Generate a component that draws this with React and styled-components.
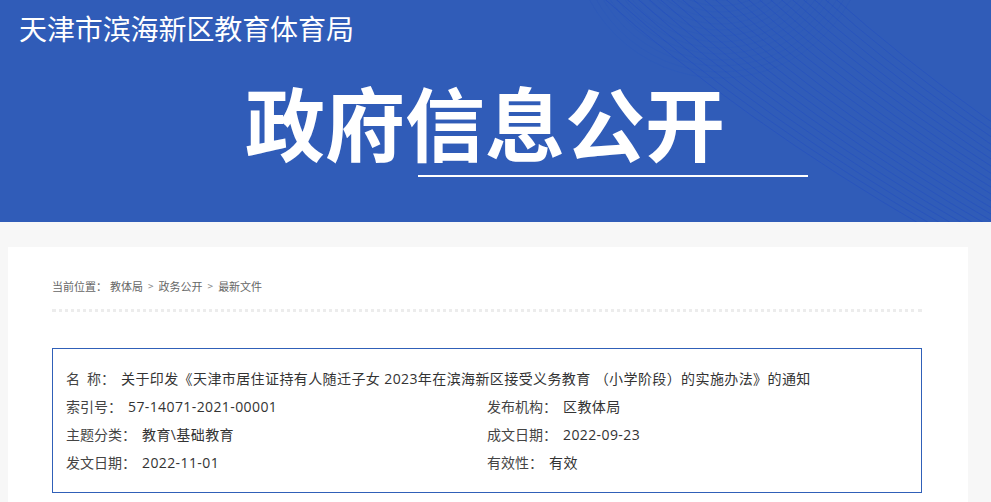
import React from "react";
import styled, { createGlobalStyle } from "styled-components";

const GlobalStyle = createGlobalStyle`
  body {
    margin: 0;
    background: #f7f7f7;
    font-family: "Noto Sans CJK SC", "Noto Sans", sans-serif;
  }
`;

const rows = [
  [
    { label: "索引号：", value: "57-14071-2021-00001" },
    { label: "发布机构：", value: "区教体局" },
  ],
  [
    { label: "主题分类：", value: "教育\\基础教育" },
    { label: "成文日期：", value: "2022-09-23" },
  ],
  [
    { label: "发文日期：", value: "2022-11-01" },
    { label: "有效性：", value: "有效" },
  ],
];

function Lines() {
  const curves = [];
  for (let i = 0; i < 22; i++) {
    const x0 = 600 + i * 11;
    curves.push(
      <path
        key={i}
        d={`M${x0} -5 Q${x0 + 140} 120 ${x0 + 330} 230`}
        fill="none"
        stroke="#1e48c4"
        strokeOpacity="0.6"
        strokeWidth="0.7"
      />
    );
  }
  const arcs = [];
  for (let i = 0; i < 14; i++) {
    arcs.push(
      <circle
        key={i}
        cx="720"
        cy="-70"
        r={70 + i * 6}
        fill="none"
        stroke="#2450c0"
        strokeOpacity="0.35"
        strokeWidth="0.6"
      />
    );
  }
  return (
    <Deco viewBox="0 0 991 222" preserveAspectRatio="none">
      {arcs}
      {curves}
    </Deco>
  );
}

function App() {
  return (
    <>
      <GlobalStyle />
      <Banner>
        <Lines />
        <SiteName>天津市滨海新区教育体育局</SiteName>
        <BigTitle>政府信息公开</BigTitle>
      </Banner>
      <Card>
        <Crumbs>
          <span>当前位置：</span>
          <CrumbLink>教体局</CrumbLink>
          <Sep>&gt;</Sep>
          <CrumbLink>政务公开</CrumbLink>
          <Sep>&gt;</Sep>
          <CrumbLink>最新文件</CrumbLink>
        </Crumbs>
        <Dots />
        <InfoBox>
          <Row>
            <Label>名{"\u2002"}称：</Label>
            <Value>
              关于印发《天津市居住证持有人随迁子女 2023年在滨海新区接受义务教育 （小学阶段）的实施办法》的通知
            </Value>
          </Row>
          {rows.map((r, i) => (
            <Pair key={i}>
              {r.map((c) => (
                <Row key={c.label}>
                  <Label>{c.label}</Label>
                  <Value>{c.value}</Value>
                </Row>
              ))}
            </Pair>
          ))}
        </InfoBox>
      </Card>
    </>
  );
}
export default App;

const Banner = styled.div`
  position: relative;
  height: 222px;
  background: #305cb8;
  overflow: hidden;
  color: #fff;
`;

const Deco = styled.svg`
  position: absolute;
  top: 0;
  left: 0;
  width: 100%;
  height: 100%;
`;

const SiteName = styled.div`
  position: relative;
  padding: 9px 0 0 19px;
  font-size: 28px;
  line-height: 38px;
  letter-spacing: -0.1px;
`;

const BigTitle = styled.h1`
  position: relative;
  margin: 27px 0 0 245px;
  font-size: 80px;
  line-height: 92px;
  font-weight: 700;
  letter-spacing: 0;
  &::after {
    content: "";
    position: absolute;
    left: 173px;
    top: 101px;
    width: 390px;
    height: 2px;
    background: #fff;
  }
`;

const Card = styled.div`
  width: 960px;
  margin: 25px 0 0 8px;
  background: #fff;
  padding: 29px 46px 20px 44px;
  box-sizing: border-box;
`;

const Crumbs = styled.div`
  font-size: 11px;
  line-height: 20px;
  color: #666;
  display: flex;
  align-items: center;
  span:first-child {
    margin-right: 3px;
  }
`;

const CrumbLink = styled.a`
  color: #666;
`;

const Sep = styled.i`
  font-style: normal;
  color: #888;
  margin: 0 5px;
  font-size: 10px;
`;

const Dots = styled.div`
  margin-top: 13px;
  border-top: 3px dotted #ececec;
`;

const InfoBox = styled.div`
  margin-top: 36px;
  border: 1px solid #3060b8;
  padding: 16px 13px 15px;
  color: #333;
  font-family: "Open Sans", "Noto Sans CJK SC", sans-serif;
  font-size: 14px;
  line-height: 28px;
`;

const Pair = styled.div`
  display: grid;
  grid-template-columns: 1fr 1fr;
`;

const Row = styled.div`
  display: flex;
  white-space: nowrap;
`;

const Label = styled.span`
  color: #444;
`;

const Value = styled.span`
  margin-left: 6px;
  letter-spacing: 0.4px;
`;
